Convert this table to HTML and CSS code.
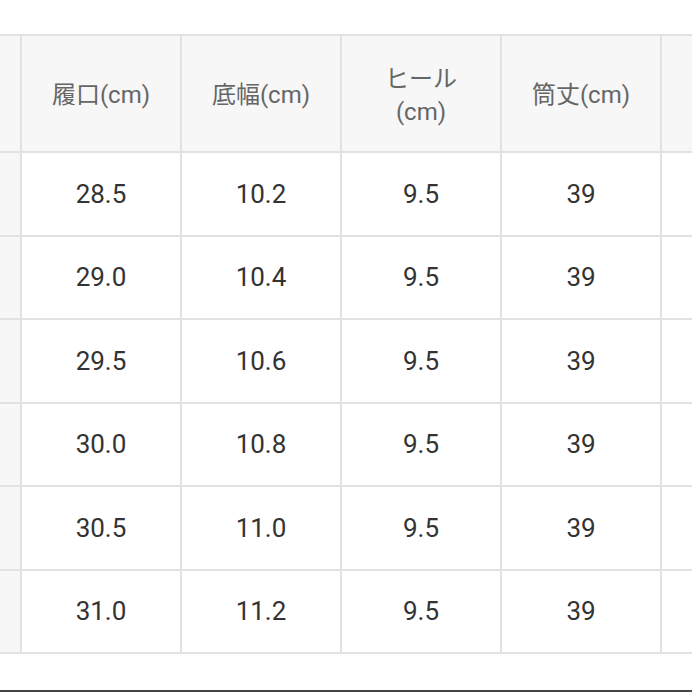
FILE: index.html
```html
<!DOCTYPE html>
<html lang="ja">
<head>
<meta charset="utf-8">
<link rel="stylesheet" href="styles.css">
</head>
<body>
<div class="page">
  <div class="table">
    <div class="cell head"></div>
    <div class="cell head">履口(cm)</div>
    <div class="cell head">底幅(cm)</div>
    <div class="cell head">ヒール<br>(cm)</div>
    <div class="cell head">筒丈(cm)</div>
    <div class="cell head"></div>

    <div class="cell side"></div><div class="cell">28.5</div><div class="cell">10.2</div><div class="cell">9.5</div><div class="cell">39</div><div class="cell"></div>
    <div class="cell side"></div><div class="cell">29.0</div><div class="cell">10.4</div><div class="cell">9.5</div><div class="cell">39</div><div class="cell"></div>
    <div class="cell side"></div><div class="cell">29.5</div><div class="cell">10.6</div><div class="cell">9.5</div><div class="cell">39</div><div class="cell"></div>
    <div class="cell side"></div><div class="cell">30.0</div><div class="cell">10.8</div><div class="cell">9.5</div><div class="cell">39</div><div class="cell"></div>
    <div class="cell side"></div><div class="cell">30.5</div><div class="cell">11.0</div><div class="cell">9.5</div><div class="cell">39</div><div class="cell"></div>
    <div class="cell side"></div><div class="cell">31.0</div><div class="cell">11.2</div><div class="cell">9.5</div><div class="cell">39</div><div class="cell"></div>
  </div>
  <div class="spacer"></div>
  <div class="bar"></div>
</div>
</body>
</html>
```
FILE: styles.css
```css
html, body {
  margin: 0;
  padding: 0;
  background: #ffffff;
}
.page {
  width: 692px;
  height: 692px;
  overflow: hidden;
  display: flex;
  flex-direction: column;
  padding-top: 34px;
  box-sizing: border-box;
}
.table {
  display: grid;
  grid-template-columns: 20px repeat(4, 158px) 1fr;
  grid-template-rows: 115px repeat(6, 81.5px);
  gap: 2px;
  padding: 2px 0;
  background: #e2e2e2;
  font-family: Roboto, "Noto Sans CJK JP", sans-serif;
}
.cell {
  background: #ffffff;
  display: flex;
  align-items: center;
  justify-content: center;
  text-align: center;
  color: #333333;
  font-size: 26px;
}
.cell.head {
  background: #f7f7f7;
  color: #666666;
  font-size: 24px;
  line-height: 33px;
  padding-top: 4px;
  box-sizing: border-box;
}
.cell.side {
  background: #f7f7f7;
}
.spacer {
  flex: 1;
}
.bar {
  height: 2px;
  background: #444444;
}
```
